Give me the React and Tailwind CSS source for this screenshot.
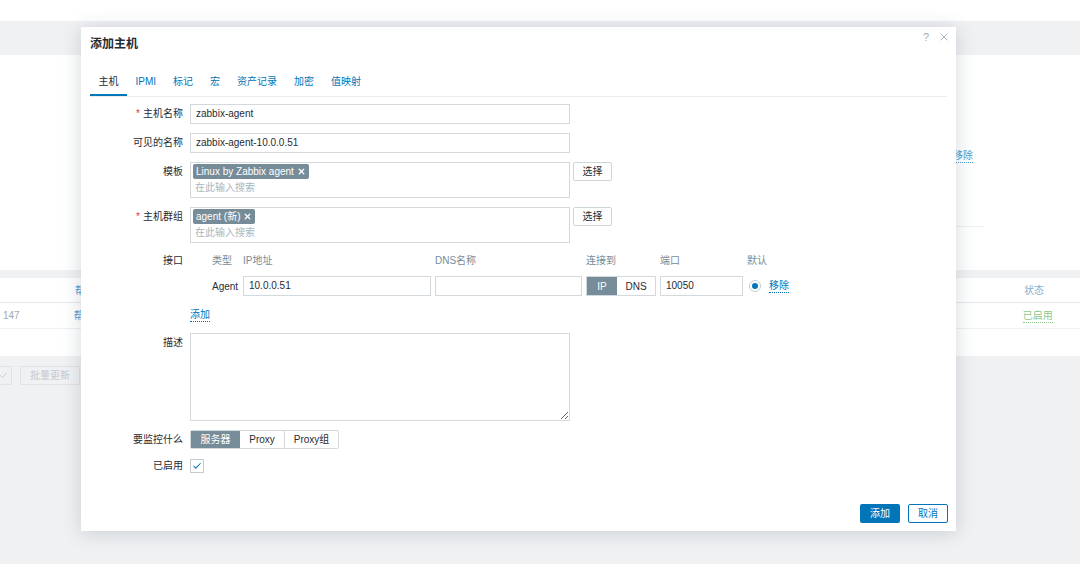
import React from 'react';
import { X, Check } from 'lucide-react';

const TABS = ['主机', 'IPMI', '标记', '宏', '资产记录', '加密', '值映射'];

// 表单行：左侧标签 + 右侧内容
const Row = ({ label, required, h = 'h-[20px] leading-[20px]', className = '', children }) => (
  <div className={`flex gap-[7px] ${className}`}>
    <div className={`w-[93px] shrink-0 text-right whitespace-nowrap ${h}`}>
      {required && <span className="text-[#e33734] mr-[3px]">*</span>}
      {label}
    </div>
    <div className="flex-1">{children}</div>
  </div>
);

const TextInput = ({ value, className = '' }) => (
  <div className={`h-[20px] leading-[18px] border border-[#d3d9dd] bg-white px-[5px] text-[#1f2c33] ${className}`}>
    {value}
  </div>
);

const MultiSelect = ({ tag }) => (
  <div className="flex gap-[3px]">
    <div className="w-[380px] h-[36px] border border-[#d3d9dd] bg-white px-[2px] pt-[1px]">
      <div className="inline-flex items-center h-[15px] bg-[#768d99] text-white pl-[3px] pr-[3px] gap-[3px] rounded-[2px]">
        <span className="leading-[15px]">{tag}</span>
        <X size={9} strokeWidth={3.5} />
      </div>
      <div className="text-[#aab5bc] leading-[16px] pl-[2px] mt-[1px]">在此输入搜索</div>
    </div>
    <button className="w-[39px] h-[19px] border border-[#cfd6da] bg-white text-[#1f2c33] rounded-[2px]">选择</button>
  </div>
);

const Head = ({ children }) => (
  <div className="h-[18px] leading-[18px] text-[#768d99] whitespace-nowrap">{children}</div>
);

export default function App() {
  return (
    <div className="relative w-full h-[564px] overflow-hidden bg-[#f0f1f3] text-[10px] text-[#1f2c33] font-['Liberation_Sans','Noto_Sans_CJK_SC',sans-serif]">
      {/* 背景页面 */}
      <div className="h-[21px] bg-white" />
      <div className="h-[34px]" />
      <div className="h-[215px] bg-white pl-[953px] pt-[94px]">
        <div className="text-[#4e9bd0] border-b border-dotted border-[#4e9bd0] w-fit leading-[13px]">移除</div>
        <div className="mt-[63px] w-[32px] border-t border-[#eef0f2]" />
      </div>
      <div className="h-[8px]" />
      <div className="bg-white">
        <div className="h-[25px] border-b border-[#e6e9ec] flex items-center">
          <span className="ml-[75px] text-[#4e9bd0]">帮</span>
          <span className="ml-[939px] text-[#7fb0d4]">状态</span>
        </div>
        <div className="h-[26px] border-b border-[#eef0f2] flex items-center">
          <span className="ml-[3px] text-[#a0aab1]">147</span>
          <span className="ml-[54px] text-[#4e9bd0]">帮</span>
          <span className="ml-[939px] text-[#8cc98a] border-b border-dotted border-[#8cc98a] leading-[13px]">已启用</span>
        </div>
        <div className="h-[27px]" />
      </div>
      <div className="mt-[10px] flex gap-[8px] -ml-[10px]">
        <div className="w-[22px] h-[19px] border border-[#dfe3e6] flex items-center justify-end pr-[3px] text-[#b8c0c6]">
          <Check size={9} />
        </div>
        <div className="w-[60px] h-[19px] border border-[#dfe3e6] flex items-center justify-center text-[#c3cacf]">批量更新</div>
      </div>

      {/* 对话框 */}
      <div className="absolute left-[81px] top-[27px] w-[875px] h-[504px] bg-white shadow-[0_2px_18px_rgba(60,80,100,0.22)] flex flex-col px-[9px] pb-[8px]">
        <div className="h-[34px] flex items-center justify-between">
          <span className="text-[12px] font-bold text-[#1f2c33]">添加主机</span>
          <div className="flex items-center gap-[9px] text-[#a3adb3] -mr-[3px] -mt-[14px]">
            <span className="text-[11px]">?</span>
            <X size={12} strokeWidth={1.8} />
          </div>
        </div>

        <div className="mt-[9px] flex border-b border-[#ebeef0] h-[27px]">
          {TABS.map((t, i) => (
            <div
              key={t}
              className={`px-[8.5px] h-[26px] leading-[24px] text-[10px] ${
                i === 0 ? 'border-b-2 border-[#0275b8] text-[#1f2c33]' : 'text-[#0275b8]'
              }`}
            >
              {t}
            </div>
          ))}
        </div>

        <div className="mt-[7px] flex flex-col gap-[9px]">
          <Row label="主机名称" required>
            <TextInput value="zabbix-agent" className="w-[380px]" />
          </Row>
          <Row label="可见的名称">
            <TextInput value="zabbix-agent-10.0.0.51" className="w-[380px]" />
          </Row>
          <Row label="模板">
            <MultiSelect tag="Linux by Zabbix agent" />
          </Row>
          <Row label="主机群组" required>
            <MultiSelect tag="agent (新)" />
          </Row>
          <Row label="接口" h="h-[18px] leading-[18px]">
            <div className="grid grid-cols-[18px_27px_188px_147px_70px_83px_18px_auto] gap-x-[4px] gap-y-[6px] items-center w-fit">
              <div />
              <Head>类型</Head>
              <Head>IP地址</Head>
              <Head>DNS名称</Head>
              <Head>连接到</Head>
              <Head>端口</Head>
              <Head>默认</Head>
              <div />

              <div />
              <div>Agent</div>
              <TextInput value="10.0.0.51" />
              <TextInput value="" />
              <div className="flex h-[20px] border border-[#d3d9dd]">
                <div className="w-[30px] bg-[#768d99] text-white flex items-center justify-center">IP</div>
                <div className="flex-1 flex items-center justify-center">DNS</div>
              </div>
              <TextInput value="10050" />
              <div className="w-[12px] h-[12px] ml-[2px] rounded-full border border-[#c4ccd1] flex items-center justify-center">
                <div className="w-[6px] h-[6px] rounded-full bg-[#0275b8]" />
              </div>
              <span className="text-[#0275b8] border-b border-dotted border-[#0275b8] leading-[13px] w-fit">移除</span>
            </div>
          </Row>
          <Row label="" h="h-[19px]">
            <div className="h-[19px] flex items-center">
              <span className="text-[#0275b8] border-b border-dotted border-[#0275b8] leading-[13px]">添加</span>
            </div>
          </Row>
          <Row label="描述">
            <textarea readOnly className="block w-[380px] h-[88px] border border-[#d3d9dd] bg-white outline-none" />
          </Row>
          <Row label="要监控什么" h="h-[19px] leading-[19px]">
            <div className="flex h-[19px] border border-[#d3d9dd] w-fit rounded-[2px]">
              <div className="w-[49px] bg-[#768d99] text-white flex items-center justify-center">服务器</div>
              <div className="w-[45px] border-r border-[#d3d9dd] flex items-center justify-center">Proxy</div>
              <div className="w-[53px] flex items-center justify-center">Proxy组</div>
            </div>
          </Row>
          <Row label="已启用" className="-mt-[2px]">
            <div className="mt-[3px] w-[14px] h-[14px] border border-[#c4ccd1] bg-white flex items-center justify-center text-[#0275b8]">
              <Check size={10} strokeWidth={2.5} />
            </div>
          </Row>
        </div>

        <div className="mt-auto flex justify-end gap-[8px] -mr-px">
          <button className="w-[40px] h-[19px] bg-[#0275b8] text-white rounded-[2px]">添加</button>
          <button className="w-[40px] h-[19px] border border-[#0275b8] text-[#0275b8] bg-white rounded-[2px]">取消</button>
        </div>
      </div>
    </div>
  );
}
